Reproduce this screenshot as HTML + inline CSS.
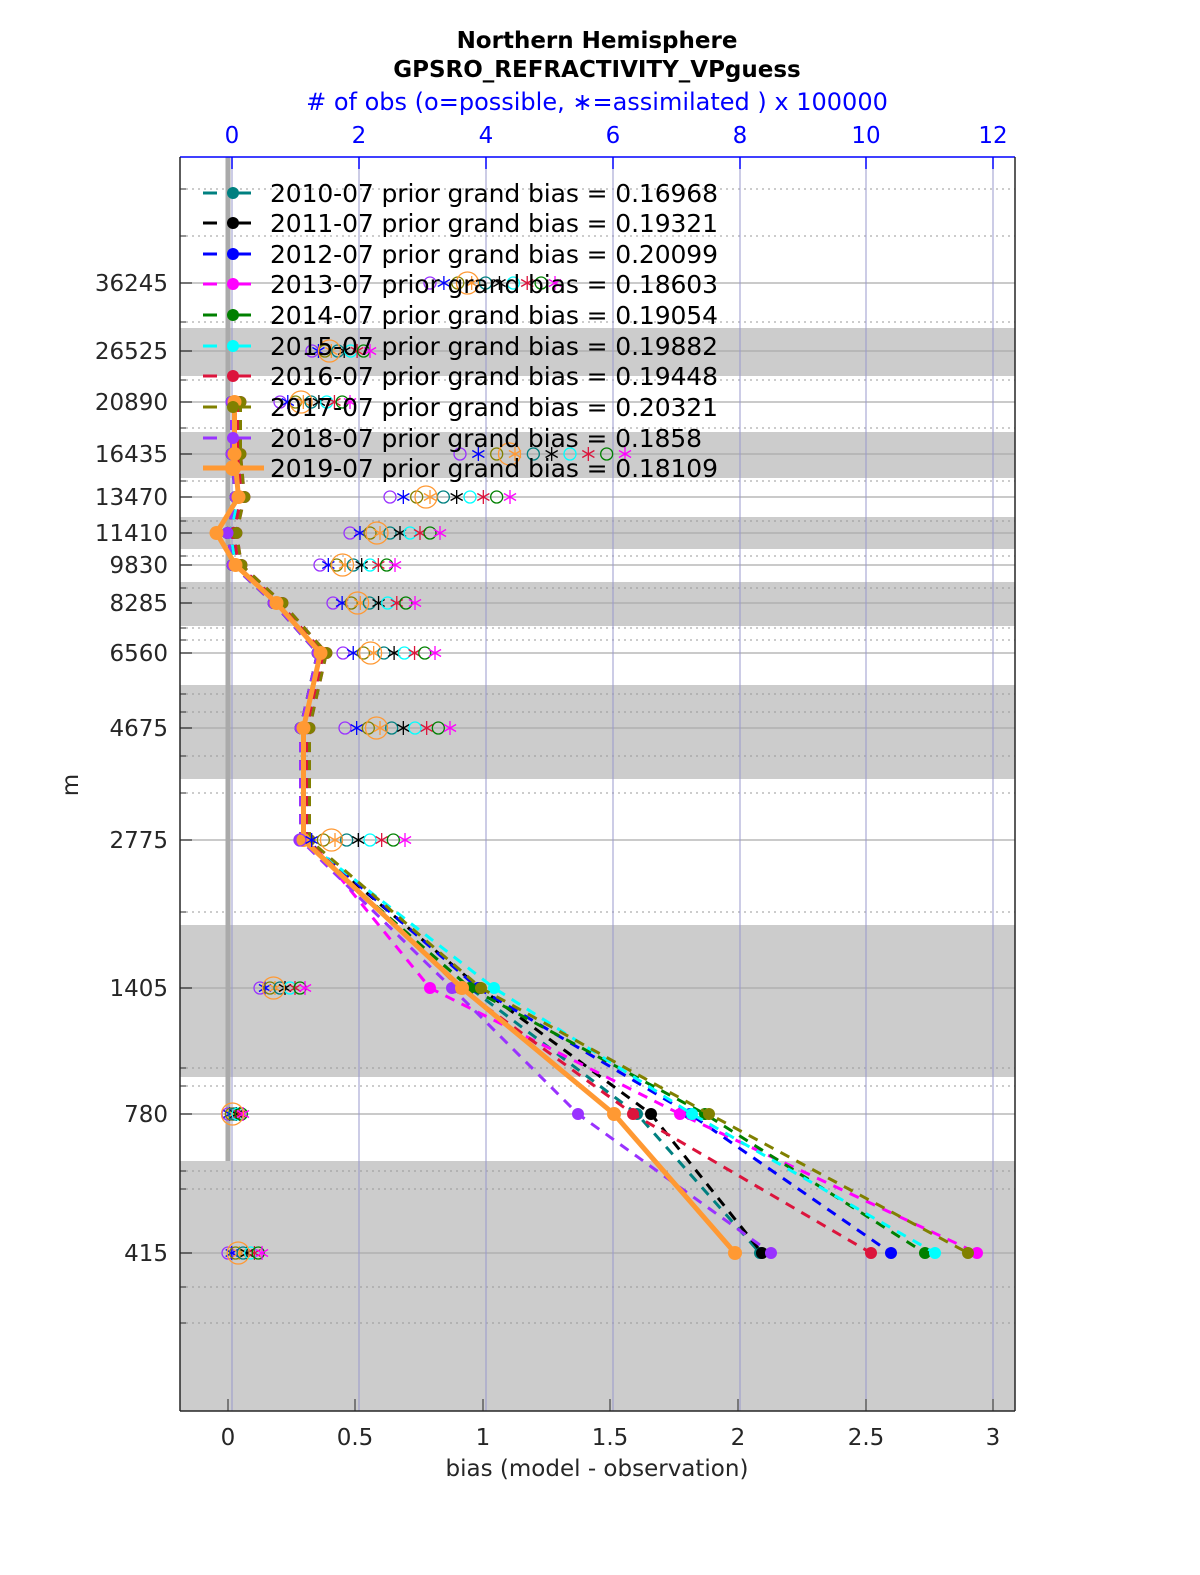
<!DOCTYPE html>
<html><head><meta charset="utf-8"><style>
html,body{margin:0;padding:0;background:#fff;width:1200px;height:1575px;overflow:hidden}
svg{display:block}
text{font-family:"DejaVu Sans","Liberation Sans",sans-serif}
</style></head><body>
<svg id="s" width="1200" height="1575" viewBox="0 0 1200 1575" xmlns="http://www.w3.org/2000/svg">
<rect width="1200" height="1575" fill="#fff"/>
<g id="bands" fill="#cccccc">
<rect x="180" y="328" width="835" height="48"/>
<rect x="180" y="432" width="835" height="46"/>
<rect x="180" y="517" width="835" height="32"/>
<rect x="180" y="582" width="835" height="44"/>
<rect x="180" y="685" width="835" height="94"/>
<rect x="180" y="925" width="835" height="152"/>
<rect x="180" y="1161" width="835" height="250"/>
</g>
<g id="grid"></g>
<g id="data"></g>
<g id="obs"></g>
<line x1="180" y1="157" x2="1015" y2="157" stroke="#0000ff" stroke-width="1.5"/>
<line x1="180" y1="157" x2="180" y2="1411" stroke="#262626" stroke-width="1.5"/>
<line x1="180" y1="1411" x2="1015" y2="1411" stroke="#262626" stroke-width="1.5"/>
<line x1="1015" y1="157" x2="1015" y2="1411" stroke="#262626" stroke-width="1.5"/>
<text x="597" y="48" font-size="23" font-weight="bold" text-anchor="middle">Northern Hemisphere</text>
<text x="597" y="77" font-size="23" font-weight="bold" text-anchor="middle">GPSRO_REFRACTIVITY_VPguess</text>
<text x="597" y="110" font-size="24" fill="#0000ff" text-anchor="middle"># of obs (o=possible, ∗=assimilated ) x 100000</text>
<g font-size="23" fill="#0000ff" text-anchor="middle">
<text x="232" y="143">0</text><text x="359" y="143">2</text><text x="486" y="143">4</text><text x="613" y="143">6</text><text x="740" y="143">8</text><text x="866" y="143">10</text><text x="993" y="143">12</text>
</g>
<g font-size="23" fill="#262626" text-anchor="middle">
<text x="228" y="1445">0</text><text x="355" y="1445">0.5</text><text x="483" y="1445">1</text><text x="610" y="1445">1.5</text><text x="738" y="1445">2</text><text x="866" y="1445">2.5</text><text x="993" y="1445">3</text>
<text x="597" y="1476">bias (model - observation)</text>
</g>
<g font-size="23" fill="#262626" text-anchor="end">
<text x="168" y="291">36245</text><text x="168" y="359">26525</text><text x="168" y="410">20890</text><text x="168" y="462">16435</text><text x="168" y="505">13470</text><text x="168" y="541">11410</text><text x="168" y="573">9830</text><text x="168" y="611">8285</text><text x="168" y="661">6560</text><text x="168" y="736">4675</text><text x="168" y="848">2775</text><text x="168" y="996">1405</text><text x="168" y="1122">780</text><text x="168" y="1261">415</text>
</g>
<text x="78" y="785" font-size="23" fill="#262626" text-anchor="middle" transform="rotate(-90 78 785)">m</text>
<g id="leg"></g>
<g font-size="25" fill="#000">
<text x="270" y="202" textLength="448">2010-07 prior grand bias = 0.16968</text>
<text x="270" y="232" textLength="448">2011-07 prior grand bias = 0.19321</text>
<text x="270" y="263" textLength="448">2012-07 prior grand bias = 0.20099</text>
<text x="270" y="293" textLength="448">2013-07 prior grand bias = 0.18603</text>
<text x="270" y="324" textLength="448">2014-07 prior grand bias = 0.19054</text>
<text x="270" y="355" textLength="448">2015-07 prior grand bias = 0.19882</text>
<text x="270" y="385" textLength="448">2016-07 prior grand bias = 0.19448</text>
<text x="270" y="416" textLength="448">2017-07 prior grand bias = 0.20321</text>
<text x="270" y="447" textLength="432">2018-07 prior grand bias = 0.1858</text>
<text x="270" y="477" textLength="448">2019-07 prior grand bias = 0.18109</text>
</g>
</svg>
<script>
var NS="http://www.w3.org/2000/svg";
function el(p,t,a){var e=document.createElementNS(NS,t);for(var k in a)e.setAttribute(k,a[k]);p.appendChild(e);return e;}
var g=document.getElementById('grid');
var lv=[283,351,402,454,497,533,565,603,653,728,840,988,1114,1253];
var minor=[189,236,322,380,428,481,521,556,588,628,640,694,712,756,793,912,1068,1086,1171,1189,1287,1323];
minor.forEach(function(y){el(g,'line',{x1:180,x2:1015,y1:y,y2:y,stroke:'#999','stroke-width':1,'stroke-dasharray':'2,4'});el(g,'line',{x1:180,x2:186,y1:y,y2:y,stroke:'#262626'});});
lv.forEach(function(y){el(g,'line',{x1:180,x2:1015,y1:y,y2:y,stroke:'#aaa','stroke-width':1.2});el(g,'line',{x1:180,x2:192,y1:y,y2:y,stroke:'#262626','stroke-width':1.2});});
[232,359,486,613,740,866,993].forEach(function(x){el(g,'line',{x1:x,x2:x,y1:157,y2:1411,stroke:'#9999cc','stroke-width':1});el(g,'line',{x1:x,x2:x,y1:157,y2:169,stroke:'#0000ff','stroke-width':1.5});});
[228,355,483,610,738,866,993].forEach(function(x){el(g,'line',{x1:x,x2:x,y1:1399,y2:1411,stroke:'#262626','stroke-width':1});});
el(g,'line',{x1:228,x2:228,y1:157,y2:1161,stroke:'#aaaaaa','stroke-width':5});
var Y=[402,454,497,533,565,603,653,728,840,988,1114,1253];
var base=[236,236,240,232,237,278,322,305,305];
var S=[['#008080',0,[470,637,760]],['#000',1,[480,651,762]],['#0000ff',2,[478,690,891]],['#ff00ff',3,[430,680,977]],['#008000',4,[470,705,925]],['#00ffff',5,[494,692,935]],['#dc143c',6,[460,633,871]],['#808000',7,[481,709,968]],['#9932ff',8,[452,578,771]],['#ff9933',9,[462,614,735]]];
var d=document.getElementById('data');
S.forEach(function(s,i){var xs=base.map(function(v){return v+(i%4-1.5)*3+(i==9&&v==232?-14:0);}).concat(s[2]);
 var pts=xs.map(function(x,j){return x+','+Y[j];}).join(' ');
 el(d,'polyline',{points:pts,fill:'none',stroke:s[0],'stroke-width':i==9?5:3,'stroke-dasharray':i==9?'none':'10,8'});
 xs.forEach(function(x,j){el(d,'circle',{cx:x,cy:Y[j],r:i==9?7:6,fill:s[0]});});
});
var o=document.getElementById('obs');
var cl=[[283,430,555],[351,312,370],[402,280,350],[454,460,625],[497,390,510],[533,350,440],[565,320,395],[603,333,415],[653,343,435],[728,345,450],[840,300,405],[988,260,305],[1114,228,243],[1253,228,262]];
var cols=['#9932ff','#0000ff','#808000','#ff9933','#008080','#000','#00ffff','#dc143c','#008000','#ff00ff'];
cl.forEach(function(c){var y=c[0],a=c[1],b=c[2];for(var k=0;k<10;k++){var x=a+(b-a)*k/9;var col=cols[k];
 if(k%2==0){el(o,'circle',{cx:x,cy:y,r:6,fill:'none',stroke:col,'stroke-width':1.3});}
 else{for(var t=0;t<3;t++){var an=t*Math.PI/3+Math.PI/2;el(o,'line',{x1:x-7*Math.cos(an),y1:y-7*Math.sin(an),x2:x+7*Math.cos(an),y2:y+7*Math.sin(an),stroke:col,'stroke-width':1.3});}}}
 var bx=a+(b-a)*0.3;el(o,'circle',{cx:bx,cy:y,r:11,fill:'none',stroke:'#ff9933','stroke-width':1.3});
});
var lg=document.getElementById('leg');
var ly=[193,223,254,284,315,346,376,407,438,468];
S.forEach(function(s,i){var y=ly[i];
 el(lg,'line',{x1:203,x2:264,y1:y,y2:y,stroke:s[0],'stroke-width':i==9?5:3,'stroke-dasharray':i==9?'none':'14,20'});
 el(lg,'circle',{cx:233,cy:y,r:i==9?8:6,fill:s[0]});});
</script>
</body></html>
